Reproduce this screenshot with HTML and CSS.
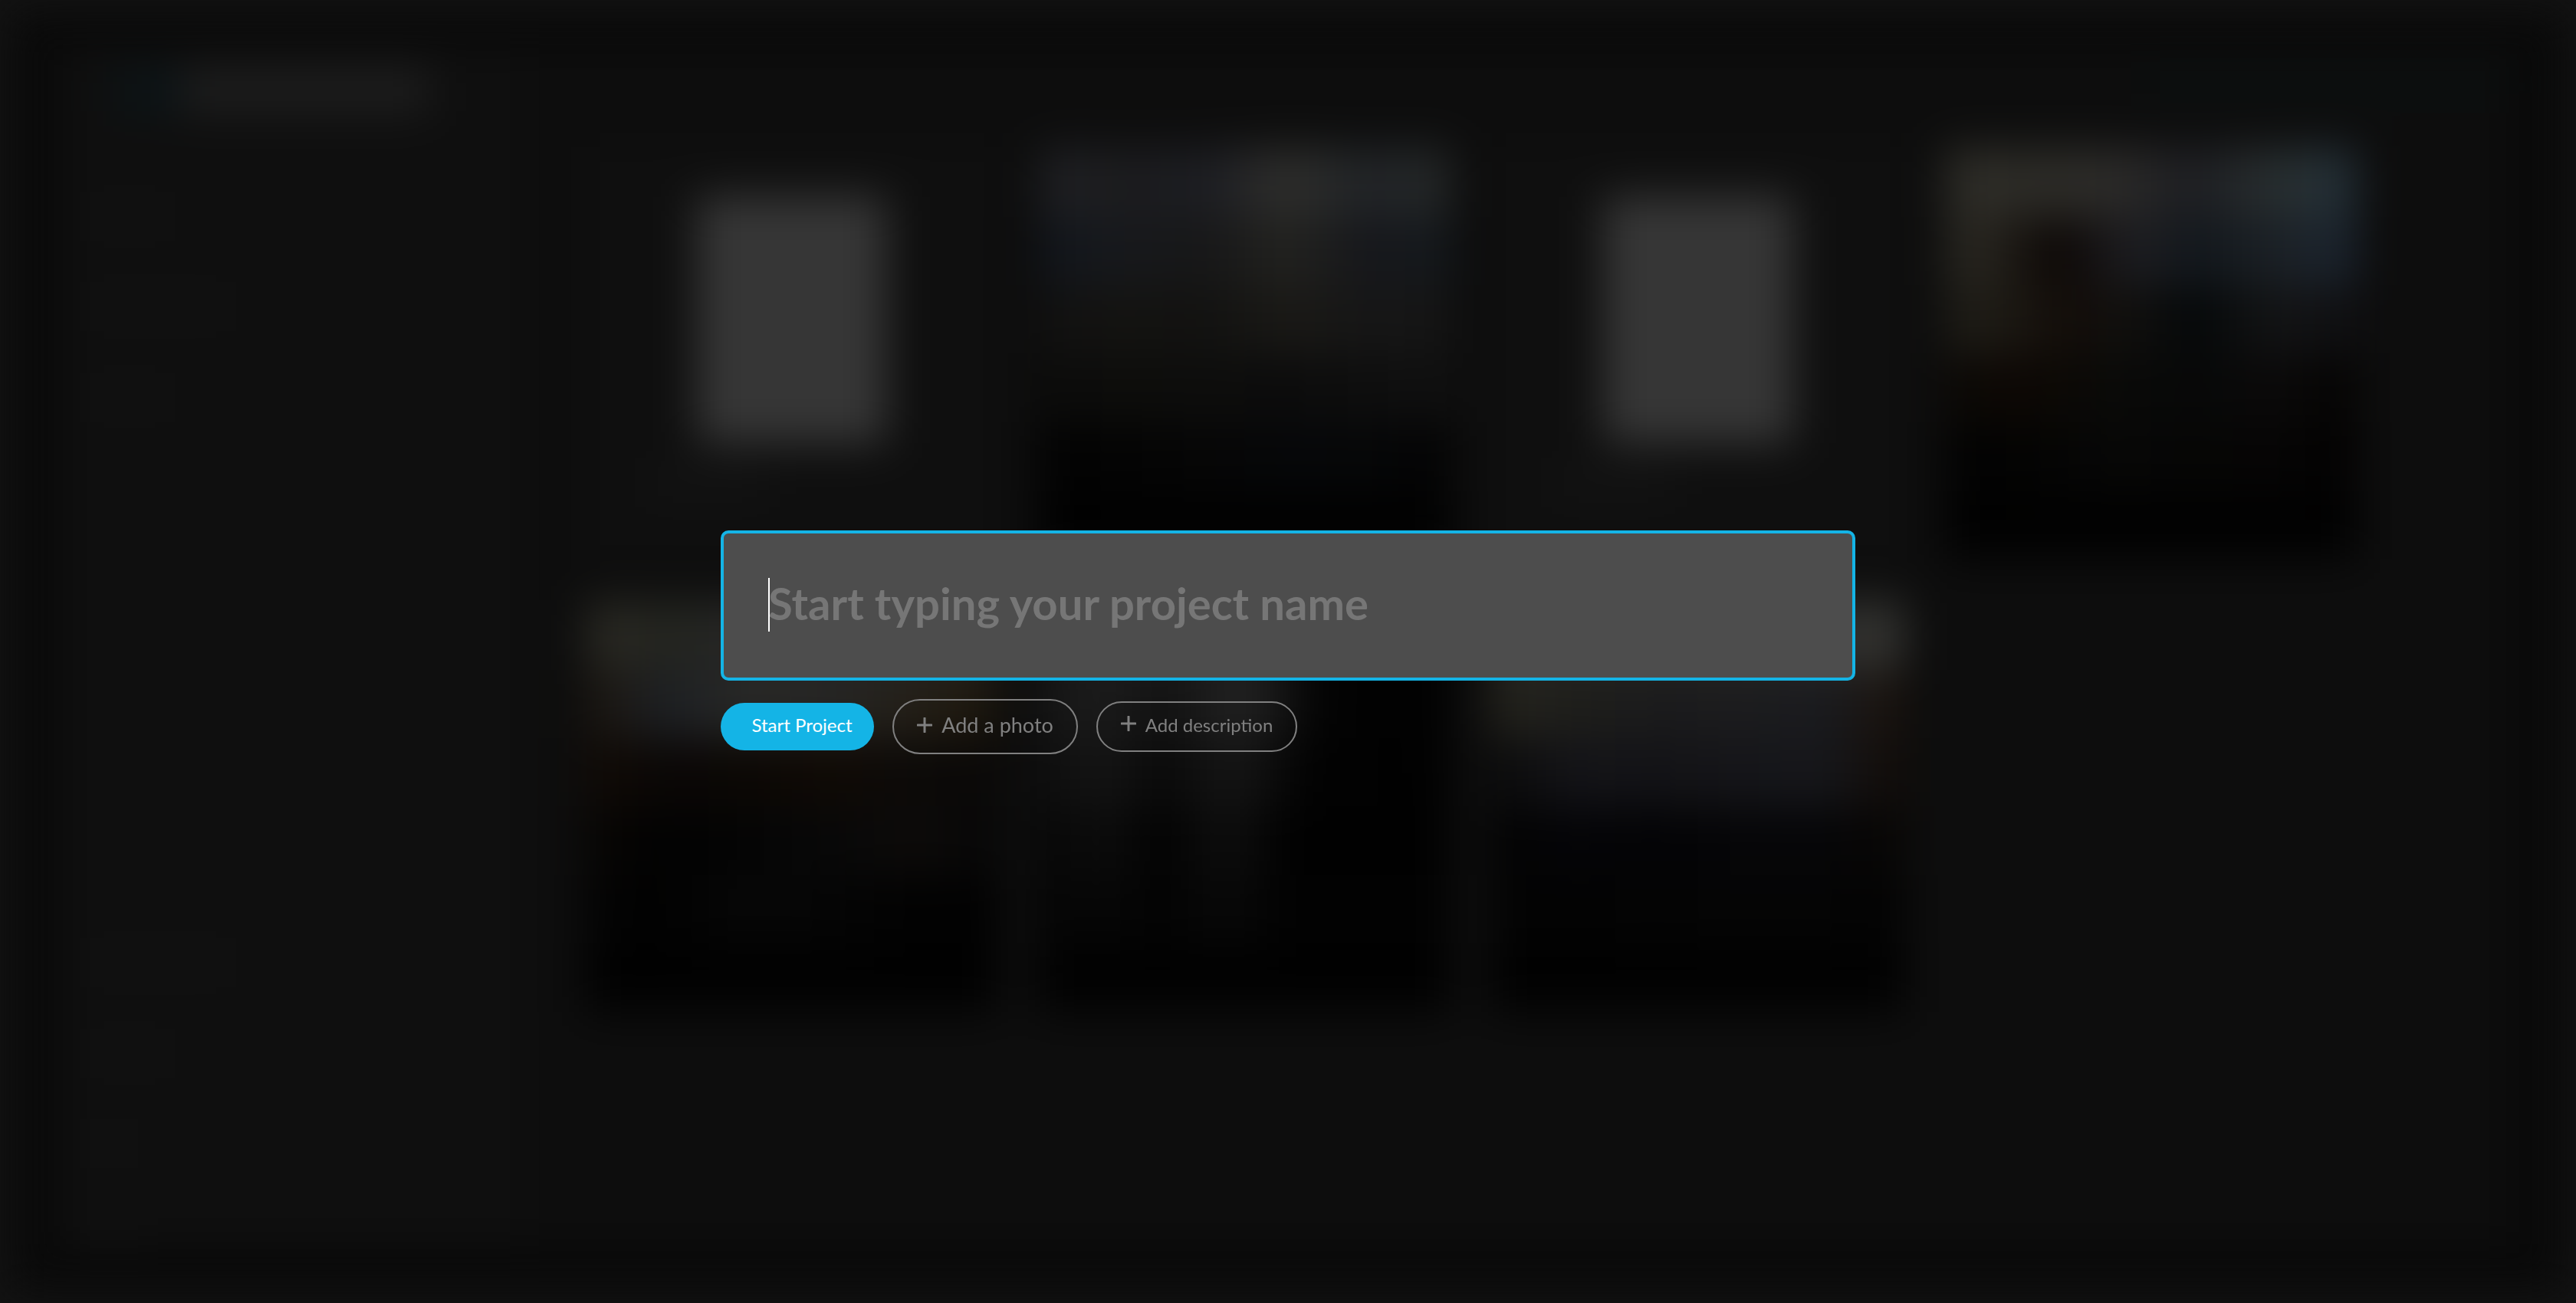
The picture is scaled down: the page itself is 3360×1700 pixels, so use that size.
FILE: index.html
```html
<!DOCTYPE html>
<html lang="en">
<head>
<meta charset="utf-8">
<meta name="viewport" content="width=device-width, initial-scale=1">
<title>New project</title>
<link rel="stylesheet" href="styles.css">
</head>
<body>
<div class="app" aria-hidden="true">
  <aside class="sidebar">
    <div class="logo"><span class="logo-mark"></span><span class="logo-name"></span></div>
    <div class="nav">
      <span class="nav-item"></span>
      <span class="nav-item nav-item-wide"></span>
      <span class="nav-item"></span>
    </div>
    <div class="nav nav-bottom">
      <span class="nav-item nav-item-wide"></span>
      <span class="nav-item"></span>
      <span class="nav-item nav-item-short"></span>
      <span class="nav-item nav-item-short"></span>
    </div>
  </aside>
  <div class="board">
    <div class="topbar"><span class="topbar-action"></span></div>
    <div class="cards">
      <div class="card card-blank"><span class="sheet"></span><span class="card-label"></span></div>
      <div class="card photo-towers"></div>
      <div class="card card-blank"><span class="sheet"></span><span class="card-label"></span></div>
      <div class="card photo-window"></div>
      <div class="card photo-sunset"></div>
      <div class="card photo-columns"></div>
      <div class="card photo-haze"></div>
    </div>
  </div>
</div>
<main class="overlay">
  <form class="project-form">
    <div class="name-field">
      <input class="name-input" type="text" aria-label="Project name" placeholder="Start typing your project name">
      <span class="caret"></span>
    </div>
    <div class="actions">
      <button class="btn btn-start" type="submit">Start Project</button>
      <button class="btn btn-photo" type="button">
        <svg class="plus" viewBox="0 0 20 20" aria-hidden="true"><path d="M10 1v18M1 10h18"/></svg>
        Add a photo
      </button>
      <button class="btn btn-description" type="button">
        <svg class="plus" viewBox="0 0 20 20" aria-hidden="true"><path d="M10 1v18M1 10h18"/></svg>
        Add description
      </button>
    </div>
  </form>
</main>
</body>
</html>
```
FILE: styles.css
```css
* { box-sizing: border-box; }

body {
  margin: 0;
  min-height: 100vh;
  background: #131313;
  color: #808080;
  font-family: Lato, "Open Sans", sans-serif;
}

/* Blurred workspace behind the form */
.app {
  position: fixed;
  inset: 14px;
  display: flex;
  padding: 44px 68px 60px 62px;
  background: #090909;
  filter: blur(28px);
}

.sidebar {
  display: flex;
  flex-direction: column;
  width: 19%;
  padding: 32px 24px 0 32px;
  background: #0f0f0f;
}

.logo { display: flex; align-items: center; padding-left: 40px; }
.logo-mark { width: 88px; height: 56px; background: #0b1417; }
.logo-name { width: 324px; height: 56px; background: #1e1e1e; }

.nav { display: flex; flex-direction: column; gap: 86px; padding-top: 120px; }
.nav-bottom { margin-top: auto; }
.nav-item { width: 120px; height: 32px; background: #121212; }
.nav-item-wide { width: 200px; }
.nav-item-short { width: 72px; }

.board { flex: 1; background: #0d0d0d; }
.topbar { display: flex; justify-content: flex-end; height: 134px; padding: 32px 0; }
.topbar-action { width: 480px; height: 40px; background: #0b0f0f; }

.cards {
  display: grid;
  grid-template-columns: repeat(4, 1fr);
  gap: 54px;
  padding: 0 204px 0 80px;
}

.card { aspect-ratio: 1; background-repeat: no-repeat; background-size: 100% 17%; }

.card-blank { display: flex; flex-direction: column; align-items: center; gap: 36px; padding-top: 64px; background: #0f0f0f; }
.sheet { width: 46%; height: 68%; flex: none; background: #363636; }
.card-label { width: 160px; height: 32px; margin-right: 220px; background: #141414; }

.photo-towers {
  background-color: #010101;
  background-image:
    linear-gradient(90deg, #1f2024, #1c1c1e, #1c1d22, #2e2e2c, #202326, #252828),
    linear-gradient(90deg, #11151c, #17191c, #171718, #22221f, #16171b, #151a1e),
    linear-gradient(90deg, #111111, #141311, #121211, #1a1916, #161616, #151515),
    linear-gradient(90deg, #0b0b0a, #0d0d0b, #0d0d0c, #0c0c0c, #0e0e0e, #101010),
    linear-gradient(90deg, #020202, #040404, #060606, #060709, #060708, #030303);
  background-position: 0 0, 0 20%, 0 40%, 0 60%, 0 80%;
}

.photo-window {
  background-color: #010101;
  background-image:
    linear-gradient(90deg, #2e2d28, #2c2b26, #2c2b29, #1d1e22, #282e2f, #223039),
    linear-gradient(90deg, #282620 8%, #0c0705 27%, #1e1e22 46%, #12171c 60%, #1b2025, #1b2531),
    linear-gradient(90deg, #1e1c16 10%, #130d09 30%, #11100f 45%, #050809 60%, #131415 80%, #0f0f12),
    linear-gradient(90deg, #0c0906, #0d0804, #0a0a08, #070808, #0b0a0a, #040302),
    linear-gradient(90deg, #020202, #040403, #070707, #060605, #060505, #020101);
  background-position: 0 0, 0 20%, 0 40%, 0 60%, 0 80%;
}

.photo-sunset {
  background-color: #010101;
  background-image:
    linear-gradient(90deg, #2a2923, #23241f, #262626, #262626, #262626, #262626),
    linear-gradient(90deg, #1b150e, #1d2024, #282826, #252524, #241f17, #1c160b),
    linear-gradient(90deg, #120b06, #0a0706, #0c0805, #100a05, #0c0a09, #0a0807),
    linear-gradient(90deg, #080604, #020202, #050505, #080808, #0d0b0a, #060606),
    linear-gradient(90deg, #030303, #020202, #070707, #050505, #020202, #010101);
  background-position: 0 0, 0 20%, 0 40%, 0 60%, 0 80%;
}

.photo-columns {
  background-color: #010101;
  background-image:
    linear-gradient(90deg, #1a1a1a 10%, #202020 20%, #181818 32%, #222222 50%, #040404 68%, #010101),
    linear-gradient(90deg, #141414, #1c1c1c 15%, #111111 30%, #232323 50%, #030303 68%, #010101),
    linear-gradient(90deg, #0c0c0c, #151515 15%, #090909 30%, #161616 48%, #020202 65%, #010101),
    linear-gradient(90deg, #050505, #0d0d0d 15%, #020202 30%, #0f0f0f 46%, #010101 60%, #010101),
    linear-gradient(90deg, #030303, #070707 15%, #030303 30%, #090909 46%, #020202 60%, #020202);
  background-position: 0 0, 0 20%, 0 40%, 0 60%, 0 80%;
}

.photo-haze {
  background-color: #010101;
  background-image:
    linear-gradient(90deg, #282825, #282825, #282825, #282825, #2c2c2a, #363633),
    linear-gradient(90deg, #25241d, #1e1e1b, #1b1b1c, #1c1c1e, #1a1b1f, #1b120b),
    linear-gradient(90deg, #0a0a0a, #141418, #131316, #151519, #16171b, #120b06),
    linear-gradient(90deg, #020202, #050508, #030305, #060608, #060608, #080604),
    linear-gradient(90deg, #030303, #030303, #040404, #050505, #050505, #020202);
  background-position: 0 0, 0 20%, 0 40%, 0 60%, 0 80%;
}

/* New project form */
.overlay {
  position: relative;
  display: flex;
  align-items: center;
  justify-content: center;
  min-height: 100vh;
  padding: 0 24px 24px;
}

.project-form { display: flex; flex-direction: column; gap: 24px; width: 100%; max-width: 1480px; }

.name-field { position: relative; }

.name-input {
  display: block;
  width: 100%;
  height: 196px;
  padding: 0 58px 8px;
  border: 4px solid #14b4e6;
  border-radius: 10px;
  outline: 0;
  background: #4d4d4d;
  color: #ffffff;
  font: 700 58px/70px Lato, "Open Sans", sans-serif;
}
.name-input::placeholder { color: #767676; opacity: 1; }

.caret {
  position: absolute;
  left: 62px;
  top: 62px;
  width: 2px;
  height: 70px;
  background: #ffffff;
}

.actions { display: flex; flex-wrap: wrap; align-items: center; gap: 24px; }

.btn {
  display: flex;
  align-items: center;
  justify-content: center;
  gap: 12px;
  padding: 0 0 4px;
  border: 2px solid #808080;
  border-radius: 36px;
  background: transparent;
  color: #808080;
  font: 400 24px/32px Lato, "Open Sans", sans-serif;
  white-space: nowrap;
}

.btn-start { width: 200px; height: 62px; padding-left: 12px; border: 0; background: #14b4e6; color: #ffffff; }
.btn-photo { width: 242px; height: 72px; font-size: 27px; }
.btn-description { width: 262px; height: 66px; }
.btn-description .plus { margin-bottom: 4px; }

.plus { width: 20px; height: 20px; flex: none; fill: none; stroke: currentColor; stroke-width: 3; stroke-linecap: round; }
```
